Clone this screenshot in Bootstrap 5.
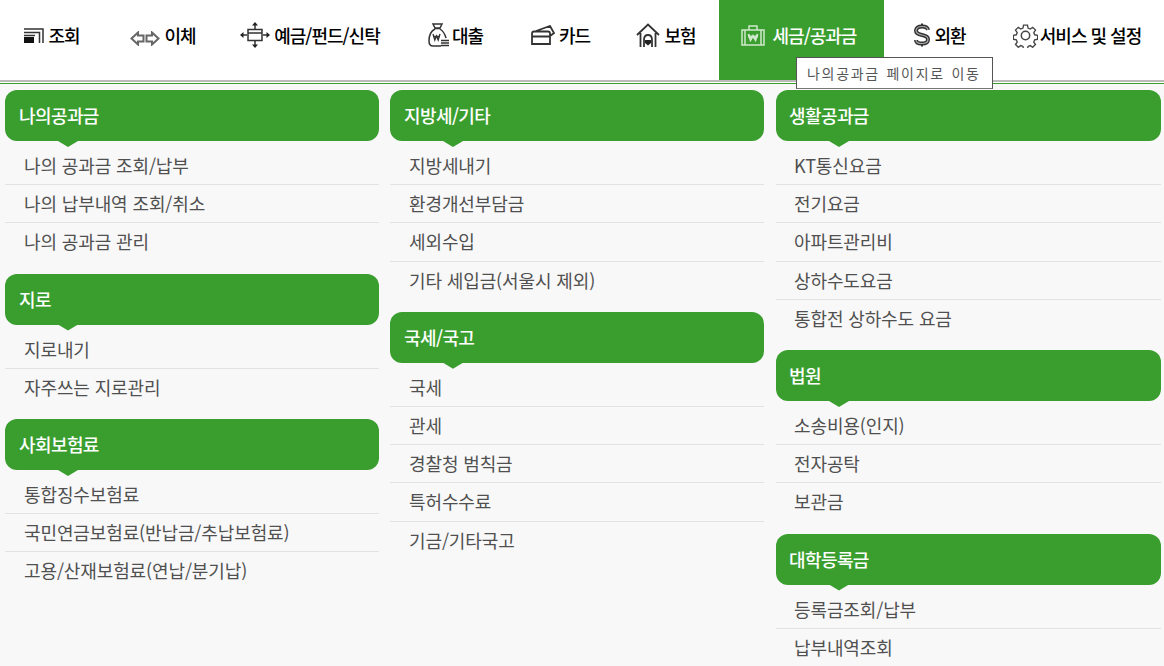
<!DOCTYPE html>
<html lang="ko">
<head>
<meta charset="UTF-8">
<title>세금/공과금</title>
<link href="https://cdn.jsdelivr.net/npm/bootstrap@5.3.0/dist/css/bootstrap.min.css" rel="stylesheet">
<style>
body { background: #f8f8f8; font-family: "Noto Sans CJK KR", "Liberation Sans", sans-serif; height: 666px; overflow: hidden; }
.top-menu { height: 82px; background: #fff; border-bottom: 2px solid #bbb; box-shadow: 0 1px 0 #fff; }
.top-menu a { height: 80px; color: #000; text-decoration: none; font-size: 18px; font-weight: 500; letter-spacing: -1px; white-space: nowrap; padding-bottom: 10px; gap: 4px; }
.top-menu a.on { background: #3a9e2f; color: #fff; gap: 8px; padding-right: 6px; }
.top-menu svg { flex: none; fill: none; stroke: #333; stroke-width: 1.5; }
.top-menu a.on svg { stroke: #cfe8cb; }
.m-1st { width: 104px; }
.m-2nd { width: 118px; }
.m-3rd { width: 176px; }
.m-4th { width: 115px; gap: 3px !important; }
.m-5th { width: 95px; }
.m-6th { width: 111px; padding-left: 5px; }
.m-7th { width: 165px; }
.m-8th { width: 111px; gap: 3px !important; }
.m-9th { flex-grow: 1; padding-right: 5px; gap: 2px !important; }
.arrows-ico { stroke: #666 !important; margin-top: 6px; }
.tip { position: absolute; left: 796px; top: 57px; width: 197px; height: 32px; background: #fff; border: 1px solid #555; border-bottom-color: #777; color: #555; font-size: 14px; letter-spacing: 1.7px; word-spacing: 1px; line-height: 30px; padding-left: 10px; white-space: nowrap; z-index: 5; }
.menu-wrap { margin-top: 1px; border-top: 1px solid #3a9e2f; padding: 6px 3px 0 5px; gap: 11px; }
.menu-col { width: 374px; flex: none; }
.menu-col:nth-child(3) { width: 385px; margin-left: 1px; }
.menu-col:nth-child(3) .group-title { padding-left: 13px; }
.menu-col:nth-child(3) .group-list li { padding-left: 18px; }
.group-title { position: relative; height: 51px; background: #3a9e2f; color: #fff; border-radius: 12px; font-size: 18px; font-weight: 500; letter-spacing: -.6px; line-height: 51px; padding-left: 14px; }
.group-title::after { content: ""; position: absolute; left: 53px; bottom: -6px; width: 20px; height: 20px; background: #3a9e2f; clip-path: polygon(0 70%, 100% 70%, 50% 100%); }
.group-list { list-style: none; margin: 6px 0 12px; padding: 0; }
.group-list li { height: 38.2px; line-height: 36px; padding-left: 19px; border-bottom: 1px solid #e2e2e2; color: #505050; font-size: 18px; letter-spacing: -.12px; white-space: nowrap; }
.group-list li:last-child { border-bottom: 0; }
</style>
</head>
<body>
<nav class="top-menu d-flex position-relative">
  <a href="#" class="m-1st d-flex align-items-center justify-content-center"><svg width="20" height="15" viewBox="0 0 20 15"><path d="M0 1h19v14M0 4.500h15.500V15M0 7.500h11"/><path stroke="none" fill="#111" d="M0 9h10v6H0z"/></svg>조회</a>
  <a href="#" class="m-2nd d-flex align-items-center justify-content-center"><svg class="arrows-ico" width="30" height="15" viewBox="0 0 30 15"><path stroke-width="2" d="M1.500 7.500l6.500-6v3h5.500v6H8v3zM28.500 7.500l-6.500-6v3h-5.500v6H22v3z"/></svg>이체</a>
  <a href="#" class="m-3rd d-flex align-items-center justify-content-center"><svg width="30" height="26" viewBox="0 0 30 26"><path d="M8 7.500h14v11H8zM8 11h14M15 2v5M15 19v5M2 13h5M23 13h5"/><path stroke="none" fill="#222" d="M15 0l-3 3.500h6zM15 26l-3-3.500h6zM0 13l3.500-3v6zM30 13l-3.500-3v6z"/></svg>예금/펀드/신탁</a>
  <a href="#" class="m-4th d-flex align-items-center justify-content-center"><svg width="21" height="24" viewBox="0 0 21 24"><path d="M5 1h9l-2 4H7zM7 5.500h5M7 6C3 8 1 11 1 18q0 5 4 5h8M12 6c3 2 5 5 6 9"/><path stroke-width="1.300" d="M5 11l1.800 6 1.700-4 1.700 4L12 11M5 13.500h7"/><path d="M13 17.500h8M13 20h8M13 22.500h8"/></svg>대출</a>
  <a href="#" class="m-5th d-flex align-items-center justify-content-center"><svg width="24" height="20" viewBox="0 0 24 20" style="stroke-width:1.800"><path d="M1 8.500q0-2 2-2h14q2 0 2 2V19H1zM1 11.500h18M5 6l14-5 4 7-4 3"/></svg>카드</a>
  <a href="#" class="m-6th d-flex align-items-center justify-content-center"><svg width="24" height="25" viewBox="0 0 24 25" style="stroke-width:1.800"><path d="M1 12L12 1.500 23 12M4.500 10v14M19.500 10v14M8 24v-7q0-5 4-5t4 5v7"/><path stroke="none" fill="#222" d="M9 17h6v3l-3 2.500L9 20z"/></svg>보험</a>
  <a href="#" class="on m-7th d-flex align-items-center justify-content-center"><svg width="24" height="21" viewBox="0 0 24 21"><path d="M1 5h22v15H1zM8 5V1h8v4M4 5v15M20 5v15"/><path stroke-width="2" d="M7.500 9l2 6 2.500-4 2.500 4 2-6M7 11.500h10"/></svg>세금/공과금</a>
  <a href="#" class="m-8th d-flex align-items-center justify-content-center"><svg width="18" height="24" viewBox="0 0 18 24"><path stroke="#333" stroke-width="2" d="M9 .5v3M9 20.500v3"/><path stroke="#333" stroke-width="4" d="M15 7Q14.500 3.500 9 3.500T3 7.500Q3 11 9 12t6 4.500Q15 20.500 9 20.500T3 17"/><path stroke="#aaa" stroke-width="1.200" d="M15 7Q14.500 3.500 9 3.500T3 7.500Q3 11 9 12t6 4.500Q15 20.500 9 20.500T3 17"/></svg>외환</a>
  <a href="#" class="m-9th d-flex align-items-center justify-content-center"><svg width="25" height="25" viewBox="0 0 25 25" style="stroke:#444"><circle cx="12.500" cy="12.500" r="4.200"/><path d="M10.300 1h4.400l.6 3.300 2.500 1 2.700-1.900 3.100 3.100-1.900 2.700 1 2.500 3.300.6v4.400l-3.300.6-1 2.500 1.900 2.700-3.100 3.100-2.700-1.900-2.500 1-.6 3.300h-4.400l-.6-3.300-2.500-1-2.700 1.900-3.100-3.100 1.900-2.700-1-2.500-3.300-.6v-4.400l3.300-.6 1-2.500-1.900-2.700 3.100-3.100 2.700 1.900 2.500-1z" transform="translate(1.250 1.250) scale(.9)"/></svg>서비스 및 설정</a>
  <div class="tip">나의공과금 페이지로 이동</div>
</nav>
<main class="menu-wrap d-flex">
  <section class="menu-col">
    <div class="group-title">나의공과금</div>
    <ul class="group-list"><li>나의 공과금 조회/납부</li><li>나의 납부내역 조회/취소</li><li>나의 공과금 관리</li></ul>
    <div class="group-title">지로</div>
    <ul class="group-list"><li>지로내기</li><li>자주쓰는 지로관리</li></ul>
    <div class="group-title">사회보험료</div>
    <ul class="group-list"><li>통합징수보험료</li><li>국민연금보험료(반납금/추납보험료)</li><li>고용/산재보험료(연납/분기납)</li></ul>
  </section>
  <section class="menu-col">
    <div class="group-title">지방세/기타</div>
    <ul class="group-list"><li>지방세내기</li><li>환경개선부담금</li><li>세외수입</li><li>기타 세입금(서울시 제외)</li></ul>
    <div class="group-title">국세/국고</div>
    <ul class="group-list"><li>국세</li><li>관세</li><li>경찰청 범칙금</li><li>특허수수료</li><li>기금/기타국고</li></ul>
  </section>
  <section class="menu-col">
    <div class="group-title">생활공과금</div>
    <ul class="group-list"><li>KT통신요금</li><li>전기요금</li><li>아파트관리비</li><li>상하수도요금</li><li>통합전 상하수도 요금</li></ul>
    <div class="group-title">법원</div>
    <ul class="group-list"><li>소송비용(인지)</li><li>전자공탁</li><li>보관금</li></ul>
    <div class="group-title">대학등록금</div>
    <ul class="group-list"><li>등록금조회/납부</li><li>납부내역조회</li></ul>
  </section>
</main>
<script src="https://cdn.jsdelivr.net/npm/bootstrap@5.3.0/dist/js/bootstrap.bundle.min.js"></script>
</body>
</html>
